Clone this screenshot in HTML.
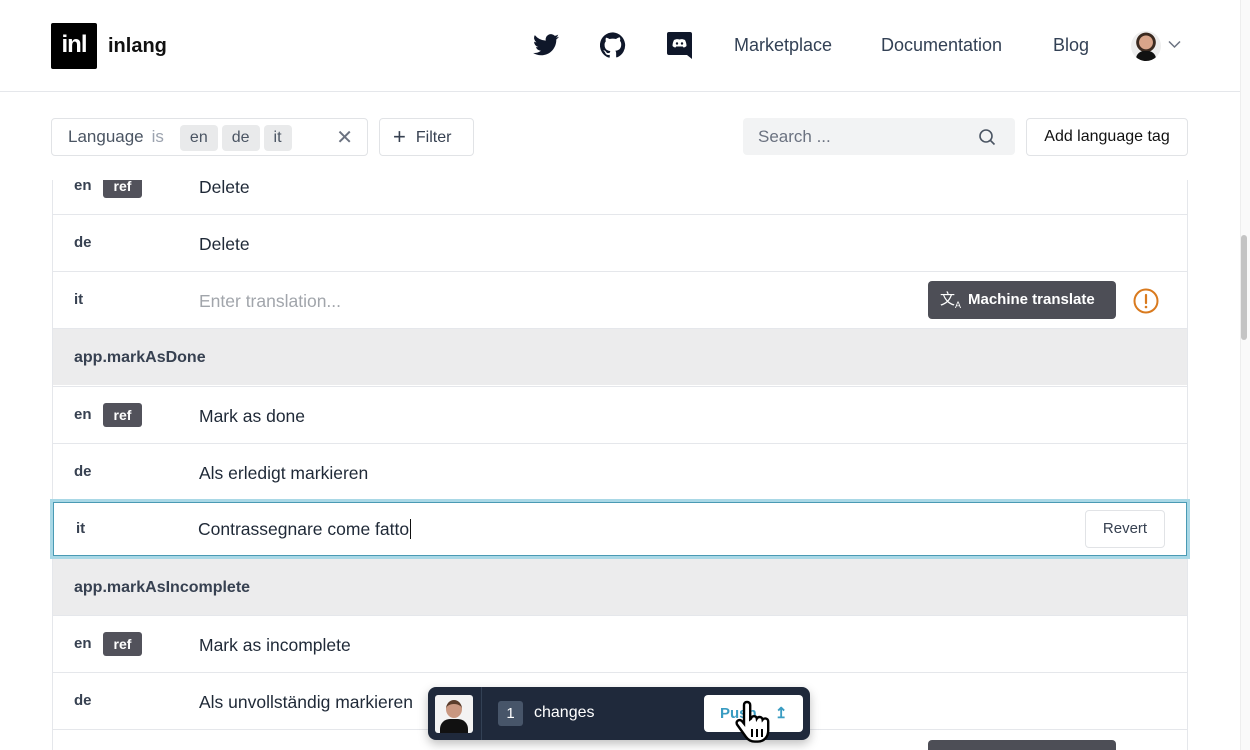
<!DOCTYPE html>
<html style="overflow:hidden"><head><meta charset="utf-8"><style>
*{box-sizing:border-box;margin:0;padding:0}
html,body{width:1250px;height:750px;overflow:hidden}
body{background:#fff;font-family:"Liberation Sans",sans-serif;color:#1f2937;position:relative}
.abs{position:absolute}
.hdr{left:0;top:0;width:1240px;height:92px;border-bottom:1px solid #e5e7eb}
.nav{font-size:18px;color:#334155;top:35px}
.rows{left:52px;top:180px;width:1136px;height:570px;border-left:1px solid #e5e7eb;border-right:1px solid #e5e7eb;overflow:hidden}
.row{position:absolute;left:0;width:100%;height:57px;border-top:1px solid #e5e7eb;background:#fff}
.row .l{position:absolute;left:21px;top:19px;font-size:15px;font-weight:bold;color:#374151}
.row .v{position:absolute;left:146px;top:19px;font-size:17.5px;color:#1f2937}
.ref{position:absolute;left:50px;top:16px;width:39px;height:24px;background:#52525b;color:#fff;font-size:14px;font-weight:bold;border-radius:3px;text-align:center;line-height:24px}
.grp{background:#ececed}
.grp .l{font-size:16px;top:20px}
.chip{display:inline-block;background:#e9eaeb;border-radius:4px;height:26px;line-height:26px;padding:0 10px;font-size:16px;color:#4b5563;margin-right:4px}
.btn{border:1px solid #e1e3e6;border-radius:4px;background:#fff}
.mt{width:188px;height:38px;background:#4d4e56;border-radius:4px;color:#fff;font-size:15px;font-weight:bold;line-height:38px}
</style></head><body>
<div class="abs hdr"></div>
<div class="abs" style="left:51px;top:23px;width:46px;height:46px;background:#000;border-radius:2px;color:#fff;font-weight:bold;font-size:24px;line-height:44px;text-align:center;letter-spacing:-1px">inl</div>
<div class="abs" style="left:108px;top:35px;font-size:20px;font-weight:bold;color:#111">inlang</div>
<svg class="abs" style="left:533px;top:34px" width="26" height="22" viewBox="0 0 24 20"><path fill="#0f172a" d="M24 2.4a10 10 0 0 1-2.8.8A4.9 4.9 0 0 0 23.3.4a9.9 9.9 0 0 1-3.1 1.2A4.9 4.9 0 0 0 11.8 6 14 14 0 0 1 1.7.9a4.9 4.9 0 0 0 1.5 6.6A4.9 4.9 0 0 1 1 6.9v.1a4.9 4.9 0 0 0 3.9 4.8 4.9 4.9 0 0 1-2.2.1 4.9 4.9 0 0 0 4.6 3.4A9.9 9.9 0 0 1 0 17.3 14 14 0 0 0 7.5 19.5c9 0 14-7.5 14-14v-.6A10 10 0 0 0 24 2.4z"/></svg>
<svg class="abs" style="left:600px;top:32px" width="26" height="26" viewBox="0 0 24 24"><path fill="#0f172a" d="M12 .3a12 12 0 0 0-3.8 23.4c.6.1.8-.3.8-.6v-2c-3.3.7-4-1.6-4-1.6-.6-1.4-1.4-1.8-1.4-1.8-1-.7.1-.7.1-.7 1.200.1 1.8 1.2 1.8 1.2 1 1.8 2.8 1.3 3.5 1 .1-.8.4-1.3.7-1.6-2.7-.3-5.5-1.3-5.5-5.9 0-1.3.5-2.4 1.2-3.2-.1-.3-.5-1.5.1-3.2 0 0 1-.3 3.3 1.2a11.5 11.5 0 0 1 6 0C17.3 4.7 18.3 5 18.3 5c.7 1.7.3 2.9.1 3.2.8.8 1.2 1.9 1.2 3.200 0 4.6-2.8 5.6-5.5 5.9.4.4.8 1.1.8 2.2v3.3c0 .3.2.7.8.6A12 12 0 0 0 12 .3z"/></svg>
<svg class="abs" style="left:667px;top:32px" width="25" height="27" viewBox="0 0 25 27"><path fill="#0f172a" d="M2 0h21a2 2 0 0 1 2 2v25l-5-4H2a2 2 0 0 1-2-2V2a2 2 0 0 1 2-2z"/><path fill="#fff" d="M7 8c2-1 4-1 5.5-.5 1.5-.5 3.500-.5 5.5.5 1 2 1.5 4 1.5 6-1 1-2 1.5-3 1.5l-.7-1h-6.6l-.7 1c-1 0-2-.5-3-1.5 0-2 .5-4 1.5-6z"/><circle cx="10" cy="11.5" r="1.2" fill="#0f172a"/><circle cx="15" cy="11.5" r="1.2" fill="#0f172a"/></svg>
<div class="abs nav" style="left:734px">Marketplace</div>
<div class="abs nav" style="left:881px">Documentation</div>
<div class="abs nav" style="left:1053px">Blog</div>
<div class="abs" style="left:1131px;top:31px;width:30px;height:30px;border-radius:50%;background:radial-gradient(circle at 50% 38%,#d9a58a 0 28%,#3b2a20 30% 40%,#eee 42%);overflow:hidden"><div style="position:absolute;left:5px;top:20px;width:20px;height:12px;background:#111;border-radius:8px 8px 0 0"></div></div>
<svg class="abs" style="left:1168px;top:40px" width="13" height="9" viewBox="0 0 13 9"><path d="M1 1.5l5.5 5.5 5.5-5.5" stroke="#6b7280" stroke-width="1.5" fill="none"/></svg>
<div class="abs" style="left:1240px;top:0;width:10px;height:750px;background:#fafafa;border-left:1px solid #eee"></div>
<div class="abs" style="left:1241px;top:235px;width:6px;height:105px;background:#c4c4c4;border-radius:3px"></div>

<div class="abs rows">
<div class="row" style="top:-22px;border-top:none"><div class="l">en</div><div class="ref">ref</div><div class="v">Delete</div></div>
<div class="row" style="top:34px"><div class="l">de</div><div class="v">Delete</div></div>
<div class="row" style="top:91px"><div class="l">it</div><div class="v" style="color:#a1a5ab">Enter translation...</div>
<div class="abs mt" style="left:875px;top:9px"><span style="position:absolute;left:12px;font-size:15px;font-weight:normal">文<sub style="font-size:9px">A</sub></span><span style="margin-left:40px">Machine translate</span></div>
<svg class="abs" style="left:1080px;top:16px" width="26" height="26" viewBox="0 0 26 26"><circle cx="13" cy="13" r="11.5" stroke="#d97a1e" stroke-width="2" fill="none"/><path d="M13 7v8" stroke="#d97a1e" stroke-width="2.2" stroke-linecap="round"/><circle cx="13" cy="19" r="1.3" fill="#d97a1e"/></svg></div>
<div class="row grp" style="top:148px"><div class="l">app.markAsDone</div></div>
<div class="row" style="top:206px"><div class="l">en</div><div class="ref">ref</div><div class="v">Mark as done</div></div>
<div class="row" style="top:263px"><div class="l">de</div><div class="v">Als erledigt markieren</div></div>
<div class="row grp" style="top:378px"><div class="l">app.markAsIncomplete</div></div>
<div class="row" style="top:435px"><div class="l">en</div><div class="ref">ref</div><div class="v">Mark as incomplete</div></div>
<div class="row" style="top:492px"><div class="l">de</div><div class="v">Als unvollständig markieren</div></div>
<div class="row" style="top:549px"><div class="l">it</div><div class="abs mt" style="left:875px;top:10px"></div></div>
</div>
<div class="abs" style="left:50px;top:499px;width:1140px;height:60px;border:3px solid #a9d8e6;background:#fff"><div style="position:absolute;inset:0;border:1px solid #4a9ab4"></div>
<div class="abs" style="left:23px;top:18px;font-size:15px;font-weight:bold;color:#374151">it</div>
<div class="abs" style="left:145px;top:17px;font-size:17.5px">Contrassegnare come fatto<span style="border-left:1px solid #111;margin-left:1px"></span></div>
<div class="abs btn" style="left:1032px;top:8px;width:80px;height:38px;text-align:center;line-height:36px;font-size:15px;color:#374151">Revert</div></div>

<div class="abs" style="left:0;top:93px;width:1240px;height:87px;background:#fff"></div>
<div class="abs btn" style="left:51px;top:118px;width:317px;height:38px;padding:6px 0 0 16px;font-size:17px;color:#4b5563"><span style="margin-right:8px">Language</span><span style="color:#9ca3af;margin-right:16px">is</span><span class="chip">en</span><span class="chip">de</span><span class="chip">it</span><span style="position:absolute;right:14px;top:6px;color:#6b7280;font-size:20px">✕</span></div>
<div class="abs btn" style="left:379px;top:118px;width:95px;height:38px;line-height:36px;font-size:16px;color:#374151;padding-left:13px"><span style="font-size:22px;vertical-align:-2px;margin-right:10px;font-weight:300">+</span>Filter</div>
<div class="abs" style="left:743px;top:118px;width:272px;height:37px;background:#f2f3f4;border-radius:4px;font-size:17px;color:#6b7280;line-height:37px;padding-left:15px">Search ...
<svg class="abs" style="left:235px;top:10px" width="18" height="18" viewBox="0 0 18 18"><circle cx="8" cy="8" r="6" stroke="#4b5563" stroke-width="1.6" fill="none"/><path d="M12.5 12.5L16.5 16.5" stroke="#4b5563" stroke-width="1.6"/></svg></div>
<div class="abs btn" style="left:1026px;top:118px;width:162px;height:38px;line-height:36px;text-align:center;font-size:16px;color:#111">Add language tag</div>

<div class="abs" style="left:428px;top:687px;width:382px;height:53px;background:#1f293b;border-radius:8px;box-shadow:0 4px 10px rgba(0,0,0,.25)">
<div class="abs" style="left:7px;top:8px;width:38px;height:38px;background:#f3f3f3;border-radius:3px;overflow:hidden"><div style="position:absolute;left:11px;top:5px;width:16px;height:18px;border-radius:50%;background:#c99780;border-top:4px solid #5a3c2a"></div><div style="position:absolute;left:5px;top:24px;width:28px;height:16px;background:#111;border-radius:10px 10px 0 0"></div></div>
<div class="abs" style="left:53px;top:0;width:1px;height:53px;background:#334155"></div>
<div class="abs" style="left:70px;top:14px;width:25px;height:25px;background:#475569;border-radius:3px;color:#fff;text-align:center;line-height:25px;font-size:15px">1</div>
<div class="abs" style="left:106px;top:17px;color:#fff;font-size:16px">changes</div>
<div class="abs" style="left:276px;top:8px;width:99px;height:37px;background:#fff;border-radius:4px;color:#3a9cc2;font-size:15px;font-weight:bold;line-height:37px;padding-left:16px">Push <span style="margin-left:14px">↥</span></div>
<svg class="abs" style="left:305px;top:12px" width="44" height="46" viewBox="0 0 22 23"><path d="M7 1.5c1 0 1.6.6 1.6 1.6v7l.4-.3c.2-.8.8-1.2 1.5-1.2.8 0 1.3.5 1.4 1.2.3-.5.8-.8 1.4-.8.8 0 1.4.6 1.5 1.3.3-.4.8-.6 1.3-.6.9 0 1.5.7 1.5 1.6v4.5c0 3-2 5.5-5.2 5.5h-1.5c-2 0-3.3-.8-4.4-2.3L2.2 13c-.6-.8-.5-1.7.2-2.2.7-.5 1.6-.3 2.2.4l.9 1.1V3.1C5.5 2.1 6 1.5 7 1.5z" fill="#fff" stroke="#000" stroke-width="1.2"/><path d="M9.5 15v4M12 15v4M14.5 15v4" stroke="#000" stroke-width="1"/></svg>
</div>
</body></html>
